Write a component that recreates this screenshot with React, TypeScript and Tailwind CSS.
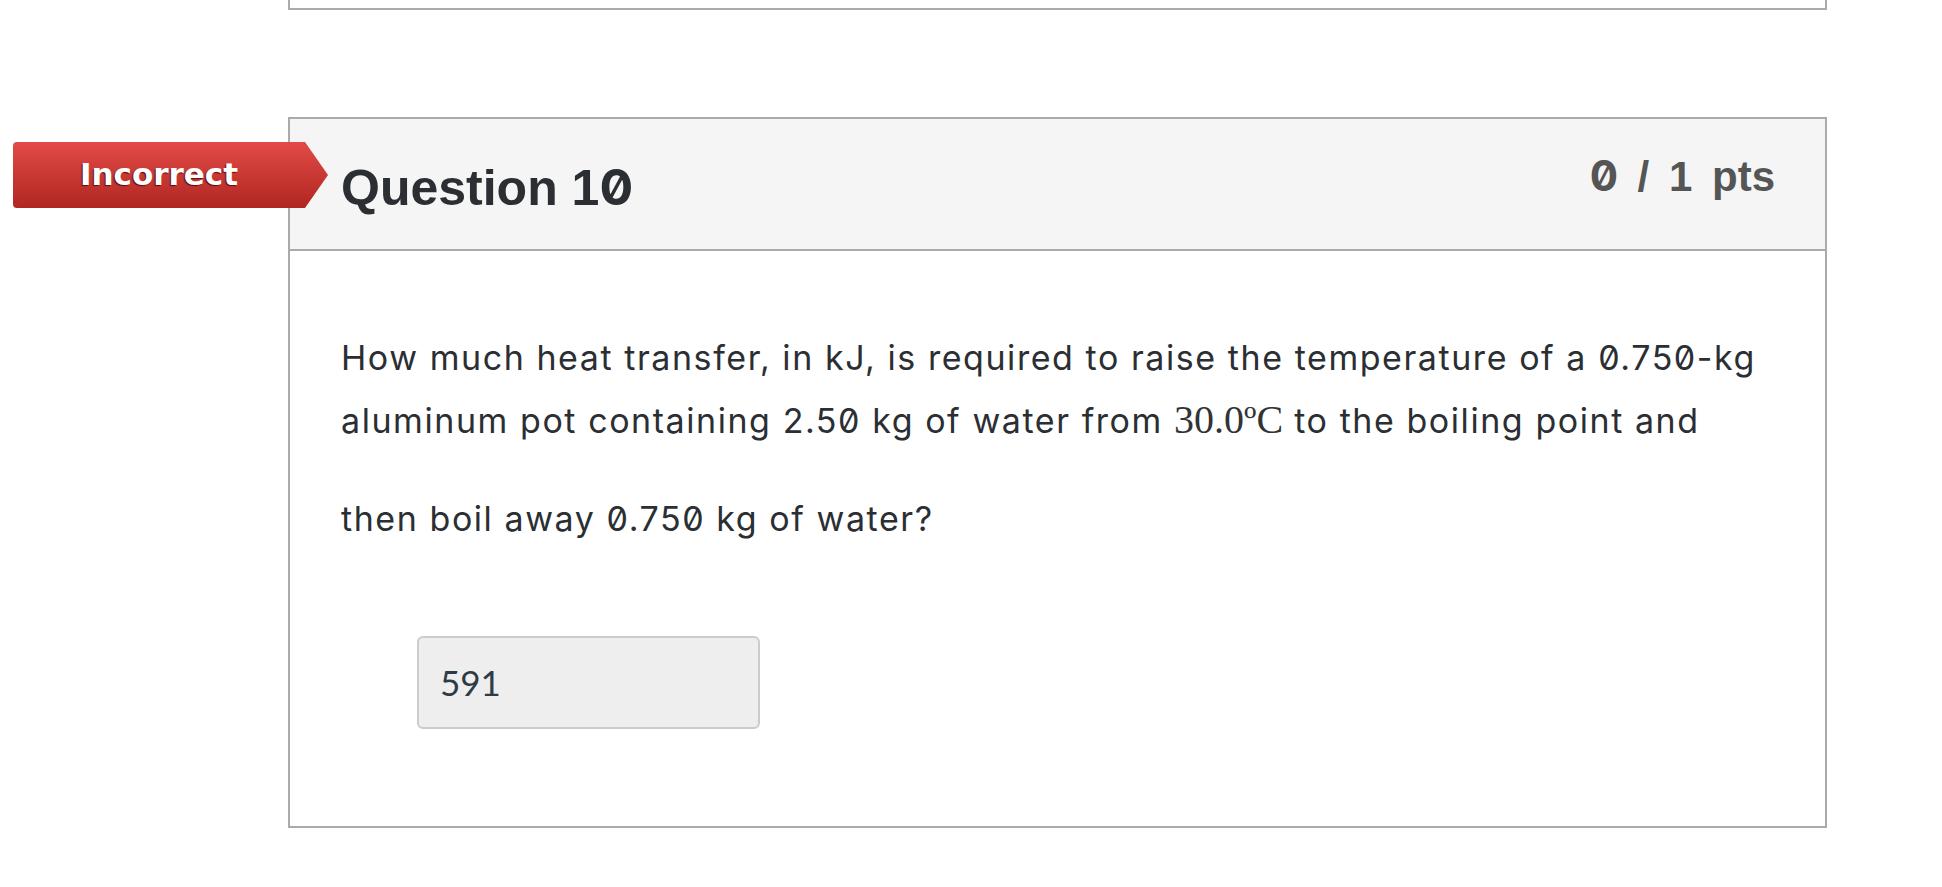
function Zero() {
  return <span className="font-['Inter'] slashed-zero">0</span>;
}

export default function App() {
  return (
    <div className="min-h-screen w-full overflow-hidden bg-white font-['Liberation_Sans',sans-serif] text-[#2b2f33]">
      {/* bottom of the previous question */}
      <div className="ml-[288px] h-[10px] w-[1539px] border-x-2 border-b-2 border-[#aaaaaa]" />

      <div className="relative ml-[288px] mt-[107px] w-[1539px] border-2 border-[#aaaaaa]">
        {/* result flag */}
        <div className="absolute left-[-277px] top-[23px] h-[66px] w-[315px] rounded-l-[4px] bg-gradient-to-b from-[#e34a47] to-[#b02620] [clip-path:polygon(0_0,292px_0,315px_50%,292px_100%,0_100%)]">
          <div className="flex h-full w-[292px] items-center justify-center pb-[2px] font-['DejaVu_Sans',sans-serif] text-[31px] font-bold text-white [text-shadow:-1px_1px_1px_rgba(60,0,0,0.75)]">
            Incorrect
          </div>
        </div>

        <div className="flex h-[132px] items-start justify-between border-b-2 border-[#aaaaaa] bg-[#f5f5f5] pl-[51px] pr-[50px]">
          <h2 className="pt-[43px] text-[50px] font-bold leading-none">
            Question 1<Zero />
          </h2>
          <div className="pt-[36px] text-[42px] font-bold leading-none text-[#555555] [word-spacing:8px]">
            <Zero /> / 1 pts
          </div>
        </div>

        <div className="px-[51px] pt-[75px] pb-[97px]">
          <p className="font-['Inter',sans-serif] text-[34px] leading-[63px] tracking-[1.56px] slashed-zero">
            How much heat transfer, in kJ, is required to raise the temperature of a 0.750-kg aluminum pot containing 2.50 kg of water from{' '}
            <span className="inline-block pb-[37px] font-['Liberation_Serif',serif] text-[40px] leading-[60px] tracking-normal text-[#333333]">
              30.0ºC
            </span>{' '}
            to the boiling point and then boil away 0.750 kg of water?
          </p>

          <div className="ml-[76px] mt-[86px] flex h-[93px] w-[343px] items-center rounded-[6px] border-2 border-[#cccccc] bg-[#eeeeee] pl-[21px] font-['Lato',sans-serif] text-[35px] text-[#2d3b45]">
            591
          </div>
        </div>
      </div>
    </div>
  );
}
